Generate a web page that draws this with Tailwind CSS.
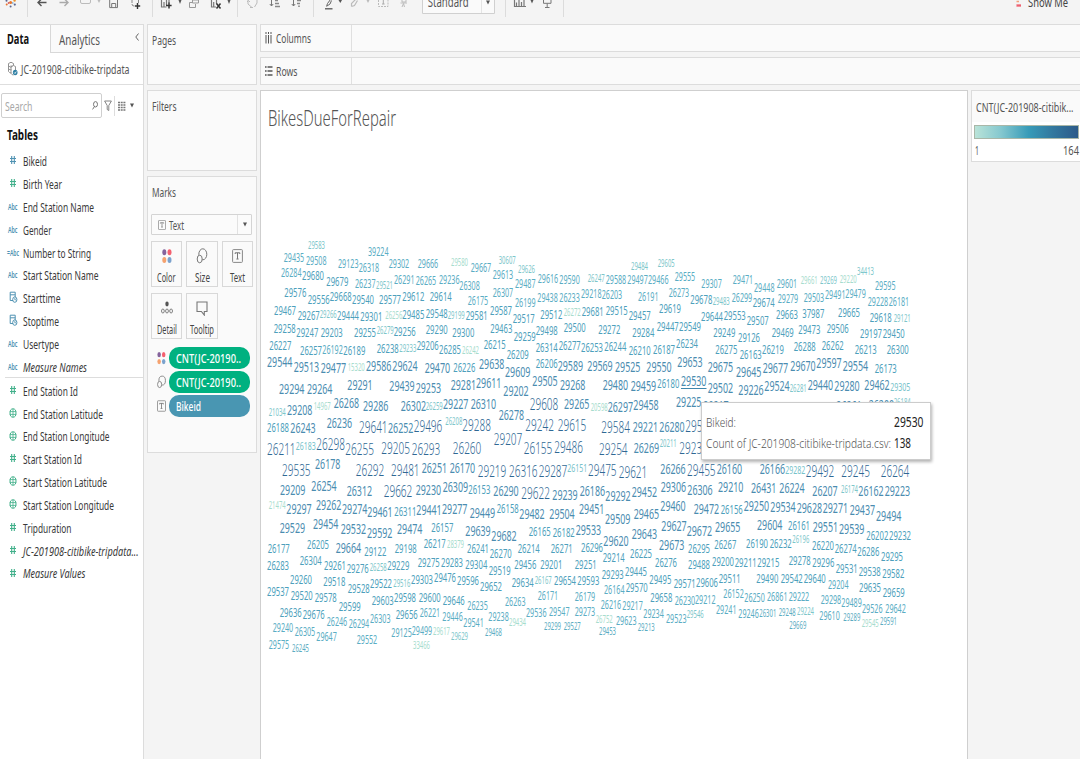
<!DOCTYPE html>
<html lang="en">
<head>
<meta charset="utf-8">
<title>BikesDueForRepair</title>
<script src="https://cdn.jsdelivr.net/npm/@tailwindcss/browser@4"></script>
</head>
<body class="w-[1080px] h-[759px] overflow-hidden bg-[#f4f4f4] font-['Noto_Sans',sans-serif] text-[12.500px] leading-none text-[#555]">

<!-- icon library -->
<svg width="0" height="0" class="absolute">
  <defs>
    <symbol id="i-hash" viewBox="0 0 8 10"><path d="M2.700 1v8M5.300 1v8M1 3.500h6M1 6.500h6" stroke="currentColor" stroke-width="1.100" fill="none"/></symbol>
    <symbol id="i-globe" viewBox="0 0 8 10"><ellipse cx="4" cy="5" rx="3" ry="4.200" stroke="currentColor" fill="none"/><path d="M4 .8v8.400M.8 3.600h6.400M.8 6.400h6.400" stroke="currentColor" stroke-width=".8" fill="none"/></symbol>
    <symbol id="i-date" viewBox="0 0 9 12"><path d="M4 9.500H1.200V1.200h5V6M1.200 3.800h5" stroke="currentColor" fill="none"/><ellipse cx="5.800" cy="8.600" rx="2.100" ry="2.700" stroke="currentColor" fill="none"/><path d="M5.800 7v1.800h1.300" stroke="currentColor" stroke-width=".8" fill="none"/></symbol>
    <symbol id="i-color" viewBox="0 0 10 16"><ellipse cx="2.300" cy="4.200" rx="2" ry="3" fill="#85639c"/><ellipse cx="7.500" cy="4.200" rx="2" ry="3" fill="#f4606f"/><ellipse cx="2.300" cy="12" rx="2" ry="3" fill="#f5a26f"/><ellipse cx="7.500" cy="12" rx="2" ry="3" fill="#7ba2cd"/></symbol>
    <symbol id="i-size" viewBox="0 0 11 16"><ellipse cx="6.300" cy="6.300" rx="4" ry="5.500" stroke="#777" fill="none"/><ellipse cx="3.200" cy="11" rx="2.500" ry="3.800" stroke="#777" fill="#fafafa"/></symbol>
    <symbol id="i-text" viewBox="0 0 11 14"><rect x=".6" y=".6" width="9.800" height="12.800" rx=".8" stroke="#888" fill="none"/><path d="M3.200 5V3.800h4.600V5M5.500 3.800v6M4.400 10h2.200" stroke="#666" stroke-width=".9" fill="none"/></symbol>
    <symbol id="i-detail" viewBox="0 0 12 14"><ellipse cx="6" cy="3" rx="1.700" ry="2.400" fill="#555"/><g fill="none" stroke="#666" stroke-width=".8"><ellipse cx="1.900" cy="10" rx="1.400" ry="2"/><ellipse cx="6" cy="10" rx="1.400" ry="2"/><ellipse cx="10.100" cy="10" rx="1.400" ry="2"/></g></symbol>
    <symbol id="i-tip" viewBox="0 0 12 15"><path d="M1 1h10v9.500H8.300v3.600L5.400 10.500H1z" stroke="#777" stroke-width="1.100" fill="none"/></symbol>
    <symbol id="i-caret" viewBox="0 0 4 5"><path d="M0 .5h4L2 4.500z" fill="#555"/></symbol>
  </defs>
</svg>

<div class="flex flex-col h-full">
  <!-- toolbar -->
  <svg class="shrink-0" width="1080" height="24" viewBox="0 0 1080 24" fill="none">
    <g stroke="#dcdcdc"><path d="M27.500 0v17M152.500 0v17M237.500 0v17M313.500 0v17M505.500 0v17M563.500 0v17"/></g>
    <g fill="#e8762d"><circle cx="10.600" cy="2.500" r="1.500"/><circle cx="6.700" cy="4.500" r="1"/></g>
    <g fill="#5b6591"><circle cx="6.500" cy=".8" r="1"/><circle cx="10.600" cy="6.600" r="1"/><circle cx="14.800" cy="4.600" r="1.100"/></g>
    <circle cx="14.600" cy=".6" r="1.200" fill="#eb912c"/><circle cx="8.500" cy="3" r=".8" fill="#c72035"/><circle cx="12.800" cy="3" r=".8" fill="#5b9bc8"/>
    <path d="M46.500 2.500H38M41.500 -1L38 2.500L41.500 6" stroke="#555" stroke-width="1.400"/>
    <path d="M59.500 2.500H68M64.500 -1L68 2.500L64.500 6" stroke="#aaa" stroke-width="1.400"/>
    <path d="M80.500 0v2q0 1.500 1.500 1.500h7q1.500 0 1.500-1.500V0" stroke="#bbb"/>
    <path d="M97.500 0h3l-1.500 3z" fill="#bbb"/>
    <path d="M109.700 0v7.600h7.800V0M111.700 7.600V3.500h4v4.100" stroke="#777"/>
    <path d="M132 0v4q0 2 2 2M138.500 0v3" stroke="#888" stroke-dasharray="3 1"/><path d="M137.500 3v6M134.800 6h5.400" stroke="#333" stroke-width="1.400"/>
    <path d="M161.500 0v7h5M164 7V2M166.500 5V0M169 3V0" stroke="#777" stroke-width="1.200"/><path d="M169 2.500v6M166 5.500h5.600" stroke="#333" stroke-width="1.500"/>
    <path d="M178.500 0h3l-1.500 4z" fill="#555"/>
    <path d="M192.500 0h6v3h-6zM192 2.500h-2.500v5h6V4" stroke="#999"/>
    <path d="M211.500 0v7h4.500M213.700 7V2M216.500 4V0" stroke="#777" stroke-width="1.200"/><path d="M216.500 3.500l4 5M220.500 3.500l-4 5" stroke="#333" stroke-width="1.500"/>
    <path d="M227.500 0h3l-1.500 4z" fill="#555"/>
    <path d="M248 0v4l4 3.500M257 0v3l-2.500 4M250 7.500h3M247 2l1.500-1.500L250 2" stroke="#bbb"/>
    <path d="M271.500 0v6M269.800 4l1.700 2 1.700-2" stroke="#777"/><path d="M275 .5h3M275 3.500h4M275 6.500h5" stroke="#888" stroke-width="1.600"/>
    <path d="M293.500 0v6M291.800 4l1.700 2 1.700-2" stroke="#777"/><path d="M297 .5h4M297 3.500h3M299 5.500v1.500" stroke="#888" stroke-width="1.600"/>
    <path d="M325 8.800h7.500" stroke="#555" stroke-width="1.300"/><path d="M326.500 6.500l1-3 3-4M327 6l3-2 1.500-3.500" stroke="#666"/>
    <path d="M338.500 0h3.500l-1.700 3z" fill="#555"/>
    <path d="M351.500 6.500v-3l4-4M351.500 6.500l3-1 3-5" stroke="#bbb" stroke-width="1.200"/>
    <path d="M366.500 0h3l-1.500 3z" fill="#bbb"/>
    <path d="M378.500 0v6.500h9.500V0" stroke="#bbb" stroke-dasharray="2 1"/><path d="M383.300 0v4M382 4h2.600" stroke="#aaa"/>
    <path d="M402 0v2h4V0M400.500 3h6.500M402 7l1.500-3.500 1 3.500" stroke="#bbb"/>
    <path d="M422.500 0v13.500h72V0" fill="#fafafa" stroke="#d0d0d0"/><path d="M481.500 0v13" stroke="#e4e4e4"/><path d="M486 .5h4l-2 4z" fill="#555"/>
    <text x="427.700" y="7" font-size="13.500" fill="#555" textLength="41" lengthAdjust="spacingAndGlyphs">Standard</text>
    <path d="M514.500 0v6.500H526M516.500 2.500v4M519 0v6M521.500 2v4M524 0v6" stroke="#777" stroke-width="1.200"/>
    <path d="M530.500 0h3l-1.500 3.500z" fill="#555"/>
    <path d="M543.500 0v3.300h7.500V0M547.200 3.500v4M545 7.500h4.500" stroke="#777"/>
    <path d="M1016.500 1.500h2.500" stroke="#f3a27b" stroke-width="1.500"/><path d="M1016.500 5.500h4.500" stroke="#ee6070" stroke-width="2.300"/>
    <text x="1028" y="6.500" font-size="13" fill="#444" textLength="40" lengthAdjust="spacingAndGlyphs">Show Me</text>
  </svg>

  <div class="flex flex-1 min-h-0">
    <!-- data pane -->
    <aside class="w-[144px] shrink-0 bg-white border-r border-t border-[#dcdcdc] flex flex-col">
      <div class="flex h-7">
        <div class="w-[50px] flex items-center pl-[7px] pb-[2px] font-bold text-[#111] text-[13.500px]"><span data-w="22">Data</span></div>
        <div class="flex-1 flex items-center justify-between pl-2 pr-[3px] bg-[#fafafa] border-l border-b border-[#d8d8d8] text-[13.500px]"><span data-w="41">Analytics</span>
          <svg width="5" height="8" viewBox="0 0 5 8" class="mb-[3px]"><path d="M3.500.5L.8 4l2.700 3.500" stroke="#666" fill="none"/></svg></div>
      </div>
      <div class="h-8 flex items-center border-b border-[#dedede] pl-[7px] pb-px gap-[3px]">
        <svg width="11" height="15" viewBox="0 0 11 15" fill="none" class="shrink-0"><path d="M1.500 2.500v8q1 1.500 3 1.500M1.500 2.500q2.500-2.500 5 0v2M1.500 5q2 2 4 .5M1.500 7.800q1.500 1.500 3 1M4 4.500v8q1 1.500 2.500 1.500M4 5.500q2.500-2 4.500 0V9" stroke="#888" stroke-width=".9"/><ellipse cx="8.200" cy="11.500" rx="2.300" ry="2.800" fill="#2e7fa3"/><path d="M7.200 11.500l.8 1 1.300-2" stroke="#fff" stroke-width=".8"/></svg>
        <span data-w="108.500">JC-201908-citibike-tripdata</span>
      </div>
      <div class="flex items-center mt-2 ml-[1px] h-[25px]">
        <div class="w-[101px] h-[25px] border border-[#cfcfcf] rounded-[2px] flex items-center justify-between pl-[3px] pr-[3px]"><span data-w="27.500" class="text-[#a8a8a8]">Search</span>
          <svg width="6" height="9" viewBox="0 0 6 9"><ellipse cx="3.500" cy="3.300" rx="2" ry="2.700" stroke="#777" fill="none"/><path d="M2.400 5.600L.6 8.400" stroke="#777"/></svg></div>
        <svg class="ml-[2px]" width="8" height="12" viewBox="0 0 8 12"><path d="M.6 1h6.800L4.800 5.500v5L3.200 9.500v-4z" stroke="#777" fill="none" stroke-width=".9"/></svg>
        <div class="w-px h-5 bg-[#ddd] ml-[2px]"></div>
        <svg class="ml-[3px]" width="8" height="10" viewBox="0 0 8 10"><path d="M0 1.500h7.500M0 4h7.500M0 6.500h7.500M0 9h7.500" stroke="#777" stroke-width="1.500" stroke-dasharray="2 .7"/></svg>
        <svg class="ml-[4px]" width="4" height="5"><use href="#i-caret"/></svg>
      </div>
      <div class="h-[32px] pl-[7px] flex items-center font-bold text-[#111] text-[13.500px]"><span data-w="31">Tables</span></div>
      <div id="dims" class="flex flex-col -mt-[1px] h-[228px]"></div>
      <div class="h-px bg-[#ddd] ml-[5px]"></div>
      <div id="meas" class="flex flex-col mt-[0.500px]"></div>
    </aside>

    <!-- shelves: pages, filters, marks -->
    <section class="w-[110px] ml-[3px] shrink-0 flex flex-col text-[12px]">
      <div class="h-[61px] bg-[#fafafa] border border-[#dcdcdc] pl-1 pt-[9px]"><span data-w="24">Pages</span></div>
      <div class="h-[81px] mt-[5px] bg-[#fafafa] border border-[#dcdcdc] pl-1 pt-[9px]"><span data-w="24.500">Filters</span></div>
      <div class="h-[277px] mt-[5px] bg-[#fafafa] border border-[#dcdcdc] pl-[3px] pr-1">
        <div class="pt-[9px] pl-px h-[37px]"><span data-w="24">Marks</span></div>
        <div class="h-[21px] bg-[#fbfbfb] border border-[#d4d4d4] rounded-[1px] flex items-center pl-[6px]">
          <svg width="8" height="10"><use href="#i-text"/></svg><span data-w="15" class="ml-[3px]">Text</span>
          <div class="ml-auto w-[14px] h-full border-l border-[#e2e2e2] flex items-center justify-center"><svg width="4" height="5"><use href="#i-caret"/></svg></div>
        </div>
        <div class="grid grid-cols-[31px_32px_31px] gap-x-1 gap-y-[6px] mt-[6px] text-[#444]">
          <div class="h-[46px] border border-[#d8d8d8] flex flex-col items-center"><svg class="mt-[6px] mb-[7px]" width="10" height="16"><use href="#i-color"/></svg><span data-w="18.500">Color</span></div>
          <div class="h-[46px] border border-[#d8d8d8] flex flex-col items-center"><svg class="mt-[6px] mb-[7px]" width="12" height="16"><use href="#i-size"/></svg><span data-w="15">Size</span></div>
          <div class="h-[46px] border border-[#d8d8d8] flex flex-col items-center"><svg class="mt-[7px] mb-[8px]" width="11" height="14"><use href="#i-text"/></svg><span data-w="15">Text</span></div>
          <div class="h-[46px] border border-[#d8d8d8] flex flex-col items-center"><svg class="mt-[7px] mb-[8px]" width="12" height="14"><use href="#i-detail"/></svg><span data-w="20">Detail</span></div>
          <div class="h-[46px] border border-[#d8d8d8] flex flex-col items-center"><svg class="mt-[7px] mb-[7px]" width="12" height="15"><use href="#i-tip"/></svg><span data-w="24">Tooltip</span></div>
        </div>
        <div class="mt-[8px] flex flex-col gap-[2px] text-white">
          <div class="flex items-center h-[22px] pl-[6px]"><svg width="9" height="14"><use href="#i-color"/></svg><div class="ml-[3px] w-[81px] h-[22px] rounded-[10px] bg-[#00b180] flex items-center pl-[7px] font-medium"><span data-w="65">CNT(JC-20190..</span></div></div>
          <div class="flex items-center h-[22px] pl-[6px]"><svg width="9" height="14"><use href="#i-size"/></svg><div class="ml-[3px] w-[81px] h-[22px] rounded-[10px] bg-[#00b180] flex items-center pl-[7px] font-medium"><span data-w="65">CNT(JC-20190..</span></div></div>
          <div class="flex items-center h-[22px] pl-[6px]"><svg width="9" height="12"><use href="#i-text"/></svg><div class="ml-[3px] w-[81px] h-[22px] rounded-[10px] bg-[#4996b2] flex items-center pl-[7px] font-medium"><span data-w="25">Bikeid</span></div></div>
        </div>
      </div>
    </section>

    <!-- sheet -->
    <main class="flex-1 min-w-0 ml-[3px] flex flex-col text-[12px]">
      <div class="h-7 shrink-0 bg-[#fafafa] border-y border-l border-[#dcdcdc] flex">
        <div class="w-[91px] border-r border-[#e0e0e0] flex items-center pl-1">
          <svg width="7" height="12" viewBox="0 0 7 12"><path d="M1 3v8.500M3.500 3v8.500M6 3v8.500" stroke="#555"/><path d="M1 0v2M3.500 0v2M6 0v2" stroke="#555"/></svg>
          <span data-w="35" class="ml-[4px]">Columns</span></div>
      </div>
      <div class="h-7 shrink-0 mt-[5px] bg-[#fafafa] border-y border-l border-[#dcdcdc] flex">
        <div class="w-[91px] border-r border-[#e0e0e0] flex items-center pl-1">
          <svg width="8" height="10" viewBox="0 0 8 10"><path d="M2.500 1h5M2.500 5h5M2.500 9h5M0 1h1.600M0 5h1.600M0 9h1.600" stroke="#555" stroke-width="1.300"/></svg>
          <span data-w="21.500" class="ml-[3px]">Rows</span></div>
      </div>
      <div class="flex flex-1 min-h-0 mt-[5px]">
        <div class="w-[708px] shrink-0 bg-white border-t border-x border-[#cfcfcf] relative">
          <h1 class="pt-[15px] pl-[6.500px] text-[21px] leading-none font-light text-[#555]"><span data-w="128">BikesDueForRepair</span></h1>
          <svg id="cloud" class="absolute left-0 top-0" width="706" height="668" viewBox="261 91 706 668"></svg>
          <div class="absolute left-[440px] top-[311px] w-[230px] h-[58px] bg-white border border-[#ccc] shadow-[1px_2px_3px_rgba(0,0,0,.3)] px-[4px] pt-[11px] text-[13.500px] font-light text-[#555] flex flex-col gap-[7px]">
            <div class="flex justify-between"><span data-w="30">Bikeid:</span><span data-w="29.500" class="text-[#222] font-normal mr-[3px]">29530</span></div>
            <div class="flex gap-[3px]"><span data-w="185">Count of JC-201908-citibike-tripdata.csv:</span><span data-w="17" class="text-[#222] font-normal">138</span></div>
          </div>
        </div>
        <div class="flex-1 ml-[3px] h-[72px] bg-white border-y border-l border-[#dcdcdc]">
          <div class="h-[31px] bg-[#fafafa] pl-1 flex items-center"><span data-w="97.500">CNT(JC-201908-citibik...</span></div>
          <div class="mt-[3px] ml-[2px] w-[105px] h-[14px] border border-[#a9b7a8] bg-[linear-gradient(90deg,#b9e3d8,#85c8cf_25%,#379bb8_52%,#33799f_75%,#2c5a89)]"></div>
          <div class="flex justify-between pl-[3px] pr-[1px] mt-[5px]"><span data-w="4">1</span><span data-w="16">164</span></div>
        </div>
      </div>
    </main>
  </div>
</div>

<script>
const BLUE = '#4f92b2', GREEN = '#41b08a';
const field = (kind, color, label, w, italic) => {
  const icon = kind.endsWith('Abc')
    ? `<span class="w-4 flex justify-center text-[8.500px] font-semibold"><span data-w="${kind === 'Abc' ? 9.5 : 12}">${kind}</span></span>`
    : `<span class="w-4 flex justify-center"><svg width="${kind === 'date' ? 9 : 8}" height="${kind === 'date' ? 12 : 10}"><use href="#i-${kind}"/></svg></span>`;
  return `<div class="h-[22.850px] shrink-0 flex items-center pl-[5px]"><span style="color:${color}">${icon}</span><span data-w="${w}" class="ml-[2px] text-[#3a3a3a] ${italic ? 'italic' : ''}">${label}</span></div>`;
};
document.getElementById('dims').innerHTML = [
  ['hash', BLUE, 'Bikeid', 24], ['hash', GREEN, 'Birth Year', 39], ['Abc', BLUE, 'End Station Name', 71],
  ['Abc', BLUE, 'Gender', 28.5], ['=Abc', BLUE, 'Number to String', 68], ['Abc', BLUE, 'Start Station Name', 75.5],
  ['date', BLUE, 'Starttime', 37.5], ['date', BLUE, 'Stoptime', 36], ['Abc', BLUE, 'Usertype', 36], ['Abc', BLUE, 'Measure Names', 64, 1]
].map(f => field(...f)).join('');
document.getElementById('meas').innerHTML = [
  ['hash', 'End Station Id', 55], ['globe', 'End Station Latitude', 80], ['globe', 'End Station Longitude', 86.5],
  ['hash', 'Start Station Id', 59], ['globe', 'Start Station Latitude', 84], ['globe', 'Start Station Longitude', 91],
  ['hash', 'Tripduration', 48.5], ['hash', 'JC-201908-citibike-tripdata...', 115.5, 1], ['hash', 'Measure Values', 62.5, 1]
].map(([k, ...r]) => field(k, GREEN, ...r)).join('');

document.querySelectorAll('[data-w]').forEach(el => {
  const w = +el.dataset.w;
  el.classList.add('relative', 'block', 'flex-none', 'h-[1em]');
  el.style.width = w + 'px';
  el.innerHTML = `<svg class="absolute left-0 top-0 h-[1em] overflow-visible" width="${w}"><text x="0" y="0.94em" fill="currentColor" textLength="${w}" lengthAdjust="spacingAndGlyphs">${el.textContent}</text></svg>`;
});

// Mark classes: [width, colour, weight]
const K = {
  p: [17, '#a6dccd', 400], a: [17, '#7cc6ca', 400], m: [17, '#5aacc2', 400], q: [20, '#76c2ca', 400],
  b: [20.5, '#5aadc4', 400], c: [22, '#4d9fbc', 400], d: [25.4, '#4a8cb0', 400], e: [28.6, '#2f6894', 300]
};
// Each block: origin x, origin y, then "bike x y class" with x/y in thirds of a pixel (y = middle).
const blocks = [
[262,235,`29583 138 31 a|29435 65 68 b|29508 132 76 b|39224 318 50 b|29123 228 86 b|26318 290 99 b|29302 380 86 b|29666 467 86 b|29580 567 82 p|29667 626 99 b|26284 57 112 b|29680 120 120 c|29679 193 138 c|26237 279 147 b|29521 342 152 a|26291 396 134 b|26265 461 138 b|29236 531 133 b|26308 592 151 b|29576 67 173 c|29556 137 192 c|29668 203 185 c|29540 270 192 c|29577 351 193 c|29612 421 185 c|29614 503 184 c|26175 617 198 b|29467 36 226 c|29267 107 241 c|29266 173 237 a|29444 225 241 c|29301 295 243 c|26256 370 240 p|29485 421 238 c|29548 491 234 c|29199 557 241 a|29581 611 242 c|29258 35 279 c|29247 103 291 c|29203 176 293 c|29255 276 292 c|26279 344 287 a|29256 395 290 c|29290 491 284 c|29300 571 292 c|26227 22 330 c|26257 114 345 c|26192 181 345 b|26189 244 345 c|26238 344 339 c|29233 412 341 a|29206 464 331 c|26285 531 344 c|26242 600 345 p|29544 15 381 d|29513 95 396 d|29477 176 399 d|15320 257 398 p|29586 312 391 d|29624 391 393 d|29470 488 397 d|26226 574 396 c`],
[480,235,`29638 -3 386 d|30607 56 76 a|29626 114 102 a|29613 38 120 b|29487 105 145 b|29616 173 131 b|29590 238 133 b|26247 323 130 a|29588 377 133 b|29497 442 135 b|29466 504 133 b|29484 453 93 a|29605 533 86 a|29555 584 126 b|26307 38 173 b|26199 105 202 b|29438 172 187 b|26233 238 187 b|29218 303 176 b|26203 365 178 b|26191 474 186 b|26273 566 173 b|29678 631 194 c|29587 30 226 c|29517 98 249 c|29512 181 239 c|26272 251 233 p|29681 305 228 c|29515 377 225 c|29457 446 241 c|29619 537 220 c|29463 31 279 c|29259 101 304 c|29498 167 287 c|29500 251 278 c|29272 355 284 c|29284 457 292 c|29447 530 273 c|29549 597 273 c|26215 11 328 c|26209 80 357 c|26314 167 336 c|26277 236 331 c|26253 303 337 c|26244 373 333 c|26210 446 345 c|26187 519 342 c|26234 588 325 c|29609 75 410 d|26206 167 386 c|29589 233 391 d|29569 322 391 d|29525 405 394 d|29550 499 394 d|29653 592 381 d`],
[695,250,`29307 19 102 b|29471 113 88 b|29448 177 112 b|29601 245 101 b|29661 317 91 p|29269 375 91 a|29220 434 89 p|34413 486 64 a|29595 540 107 b|29483 53 153 a|26299 110 142 b|29674 173 156 c|29279 248 145 b|29503 326 142 b|29491 390 135 b|29479 451 131 b|29228 518 155 b|26181 581 155 b|29644 18 199 c|29553 86 197 c|29507 155 210 c|29663 243 193 c|37987 322 189 c|29665 429 186 c|29618 524 203 c|29121 596 204 a|29249 55 246 c|29126 129 262 c|29469 230 247 c|29473 310 239 c|29506 395 234 c|29197 495 250 c|29450 563 250 c|26275 61 297 c|26163 134 312 c|26219 201 299 c|26288 296 289 c|26262 380 286 c|26213 479 299 c|26300 575 297 c|29675 38 349 d|29645 123 364 d|29677 203 352 d|29670 286 346 d|29597 364 339 d|29554 443 348 d|26173 539 354 c|29502 38 412 d|29226 130 420 d|29524 208 407 d|26281 284 416 a|29440 338 403 d|29280 418 408 d|29462 508 405 d|29305 586 410 q|29217 25 468 d|26261 424 466 d|26200 521 463 d|26184 596 458 a`],
[262,375,`29294 51 42 d|29264 135 42 d|29291 256 30 d|29439 382 32 d|29253 461 37 d|29281 566 29 d|21034 20 111 a|29208 75 103 d|14967 155 95 p|26268 215 84 d|29286 303 93 d|26302 416 93 d|26259 491 95 a|29227 543 85 d|26310 626 87 d|26188 15 156 c|26243 85 159 d|26236 194 142 d|29641 291 155 e|26252 378 157 d|29496 455 154 e|26208 550 140 a|29288 601 149 e|26211 15 221 e|26183 101 212 q|26298 163 207 e|26255 250 221 e|29205 358 220 e|26293 449 221 e|26260 572 220 e|29535 60 286 e|26178 159 267 d|26292 281 286 e|29481 387 285 e|26251 479 279 d|26170 563 279 d|29219 647 288 e|29209 54 345 d|26254 148 332 d|26312 254 346 d|29662 365 349 e|29230 461 344 d|26309 542 334 d|26153 619 342 c|21474 20 392 p|29297 73 401 d|29262 162 389 d|29274 240 402 d|29461 316 409 d|26311 397 408 c|29441 463 403 d|29277 540 402 d|29449 623 414 d`],
[480,375,`29611 -12 24 d|29202 70 48 d|29505 157 18 d|29268 240 30 d|29480 368 29 d|29459 452 31 d|26180 532 25 c|29530 603 16 d|26278 56 120 d|29608 149 86 e|29265 252 85 d|20598 332 97 p|26297 383 94 d|29458 460 90 d|29225 588 81 d|29242 136 149 e|29615 233 149 e|29584 364 155 e|29221 458 154 d|26280 538 154 d|29543 616 154 e|29207 41 193 e|26155 131 220 e|29486 223 215 e|29254 357 221 e|26269 461 219 d|20211 539 206 a|29231 598 220 e|26316 87 287 e|29287 176 289 e|26151 262 279 q|29475 324 286 e|29621 416 291 e|26266 541 280 d|26290 40 346 d|29622 124 354 e|29239 217 358 d|26186 299 346 d|29292 376 363 d|29452 455 351 d|29306 542 334 d|26158 50 401 c|29482 118 417 d|29504 208 417 d|29451 297 401 d|29509 375 430 d|29465 461 417 d|29460 541 393 d`],
[262,515,`29529 53 39 d|29454 153 27 d|29532 236 41 d|29592 315 54 d|29474 405 41 d|26157 508 37 c|29639 610 48 d|29682 688 62 d|26165 800 48 c|26182 872 51 c|29533 941 43 d|26177 17 99 c|26205 135 88 c|29664 221 99 d|29122 307 109 c|29198 398 99 c|26217 485 86 c|28379 555 88 p|26241 615 101 c|26270 683 115 c|26214 767 101 c|26271 866 99 c|26296 957 96 c|26283 15 152 c|26304 113 135 c|29261 186 152 c|29276 254 159 c|26258 323 157 a|29229 376 152 c|29275 467 141 c|29283 537 141 c|29304 610 149 c|29519 680 167 c|29456 757 149 c|29201 835 147 c|29251 938 147 c|29260 84 193 c|29518 184 198 c|29528 257 220 c|29522 324 204 c|29516 394 204 a|29303 447 194 c|29476 516 188 c|29596 585 196 c|29652 654 215 c|29634 749 201 c|26167 818 197 a|29654 876 196 c|29593 946 196 c|29537 15 229 c|29520 86 241 c|29578 158 246 c|29599 230 273 c|29603 329 257 c|29598 396 247 c|29600 470 247 c|29646 542 257 c|26235 616 273 b|26263 729 261 b|26171 827 241 b|26179 938 246 b|29636 53 291 c|29676 122 299 c|26246 194 320 b|26294 260 327 b|26303 324 312 b|29656 401 299 c|26221 473 292 b|29446 541 306 b|29541 604 322 b|29238 679 304 b|29434 741 322 p|29536 792 294 b|29547 861 289 b|29273 938 291 b|29240 32 338 b|26305 98 349 b|29647 163 364 b|29552 284 373 b|29125 388 352 b|29499 449 346 b|29617 513 349 p|29629 567 365 a|29468 669 352 m|29299 846 335 m|29527 905 335 m|29575 20 388 b|26245 90 399 m|33466 453 391 p`],
[585,455,`29455 306 46 e|26160 395 40 d|26166 524 40 d|29282 601 44 q|29492 662 47 e|29245 769 47 e|26264 887 47 e|26306 307 105 d|29210 399 95 d|26431 498 97 d|26224 583 97 d|26207 682 106 d|26174 768 103 a|26162 820 106 d|29223 899 108 d|29472 326 160 d|26156 407 163 c|29250 476 153 d|29534 556 154 d|29628 635 158 d|29271 713 158 d|29437 794 163 d|29494 873 182 d|29620 55 256 d|29643 140 237 d|29627 229 211 d|29672 305 226 d|29655 390 216 d|29604 516 210 d|26161 609 211 c|29551 683 216 d|29539 762 220 d|26202 844 240 c|29232 912 242 c|29214 53 308 c|26225 135 295 c|29673 222 269 d|26295 309 279 c|26267 388 269 c|26190 483 264 c|26232 554 266 c|26196 622 253 a|26220 681 271 c|26274 749 281 c|26286 817 290 c|29295 888 303 c|26276 210 321 c|29488 309 327 c|29200 381 320 c|29211 449 322 c|29215 517 322 c|29278 611 317 c|29296 682 322 c|29531 752 340 c|29538 821 348 c|29582 892 355 c|29293 50 359 c|29445 120 348 c|29495 193 374 c|29571 266 386 c|29606 333 381 c|29511 401 369 c|29490 514 370 c|29542 587 369 c|29640 656 371 c|29204 729 390 b|29635 822 398 c|29659 893 413 c|26164 57 405 b|29570 122 397 c|29658 196 427 c|26230 269 437 b|29212 330 434 b|26152 415 415 b|26250 478 427 b|26861 546 426 b|29222 611 426 b|29298 707 435 b|29489 769 444 b|29526 831 460 b|29642 901 461 b|26216 47 450 b|29217 112 452 b|26752 32 492 p|29623 93 497 b|29213 158 518 m|29234 175 476 b|29523 243 491 b|29546 305 479 a|29241 393 465 b|29246 460 476 b|26301 523 474 m|29248 581 471 m|29224 636 468 a|29610 703 482 b|29289 775 487 m|29545 830 505 p|29591 885 500 m|29669 613 511 m|29453 42 529 m`]
];
let out = '';
for (const [ox, oy, list] of blocks) for (const item of list.split('|')) {
  const [t, x, y, k] = item.split(' ');
  const [w, color, weight] = K[k], px = ox + x / 3, py = oy + y / 3 + w * 0.205;
  out += `<text x="${px.toFixed(1)}" y="${py.toFixed(1)}" font-size="${(w * 0.58).toFixed(1)}" font-weight="${weight}" fill="${color}" textLength="${w}" lengthAdjust="spacingAndGlyphs">${t}</text>`;
}
out += '<path d="M681 388.500h25.500" stroke="#3f86ab"/>';
document.getElementById('cloud').innerHTML = out;
</script>
</body>
</html>
